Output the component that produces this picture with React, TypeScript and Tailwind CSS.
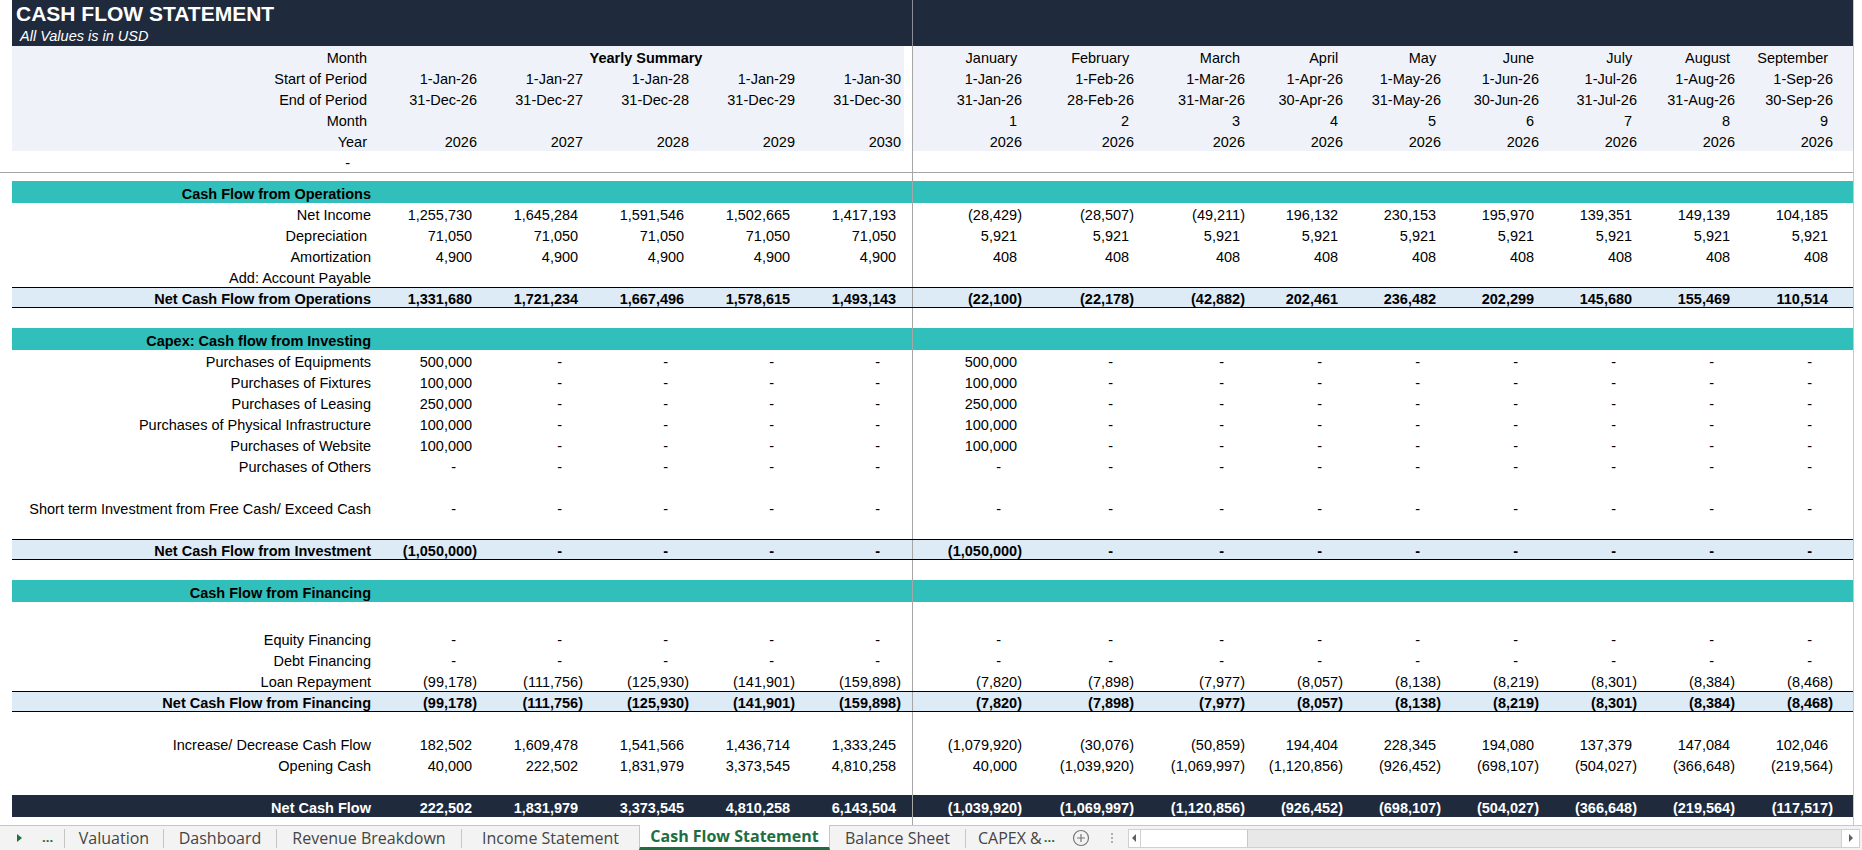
import React from 'react';

const MW = ['w-[112px]', 'w-[112px]', 'w-[111px]', 'w-[98px]', 'w-[98px]', 'w-[98px]', 'w-[98px]', 'w-[98px]', 'w-[98px]'];
const DIV = 'bg-[#a6a6a6]';

function Num({ v }: { v: string }) {
  if (v === '') return null;
  if (v === '-')
    return (
      <>
        -<span className="invisible">00)</span>
      </>
    );
  if (v.startsWith('(')) return <>{v}</>;
  return (
    <>
      {v}
      <span className="invisible">)</span>
    </>
  );
}

type RowProps = {
  h?: string;
  bg?: string;
  gapBg?: string;
  border?: boolean;
  label?: React.ReactNode;
  labelCls?: string;
  yearly?: React.ReactNode;
  y?: string[];
  m?: string[];
  kind?: 'num' | 'text' | 'trail';
  cellCls?: string;
};

function Val({ v, kind }: { v: string; kind: 'num' | 'text' | 'trail' }) {
  if (kind === 'num') return <Num v={v} />;
  if (kind === 'trail')
    return (
      <>
        {v}
        <span className="invisible">)</span>
      </>
    );
  return <>{v}</>;
}

function Row({
  h = 'h-[21px]',
  bg = '',
  gapBg = '',
  border = false,
  label,
  labelCls = 'pr-[3px]',
  yearly,
  y = [],
  m = [],
  kind = 'num',
  cellCls = '',
}: RowProps) {
  return (
    <div className={`flex ${h}`}>
      <div className="w-[12px] shrink-0 bg-white" />
      <div className={`flex flex-1 ${bg} ${border ? 'border-y border-black' : ''}`}>
        <div className={`w-[362px] shrink-0 flex items-center justify-end pt-[4px] whitespace-nowrap ${labelCls}`}>{label}</div>
        {yearly !== undefined ? (
          <div className="w-[530px] shrink-0 flex items-center pt-[4px]">{yearly}</div>
        ) : (
          [0, 1, 2, 3, 4].map((i) => (
            <div key={i} className={`w-[106px] shrink-0 flex items-center justify-end pr-[3px] pt-[4px] whitespace-nowrap ${cellCls}`}>
              {y[i] !== undefined && <Val v={y[i]} kind={kind} />}
            </div>
          ))
        )}
        <div className={`w-[8px] shrink-0 ${gapBg}`} />
        <div className={`w-[1px] shrink-0 ${DIV}`} />
        {MW.map((w, i) => (
          <div key={i} className={`${w} shrink-0 flex items-center justify-end pr-[3px] pt-[4px] whitespace-nowrap ${cellCls}`}>
            {m[i] !== undefined && <Val v={m[i]} kind={kind} />}
          </div>
        ))}
        <div className="flex-1" />
      </div>
    </div>
  );
}

const dash9 = Array(9).fill('-');
const dash8 = Array(8).fill('-');
const dash4 = Array(4).fill('-');
const dash5 = Array(5).fill('-');

export default function App() {
  const hb = 'bg-[#eff3f9]';
  const teal = 'bg-[#30bfbb] font-bold';
  const net = 'bg-[#ddebf7] font-bold';
  return (
    <div className="w-[1862px] h-[850px] overflow-hidden bg-white text-[14.5px] text-black font-['Liberation_Sans',Arial,sans-serif] leading-none">
      <div className="flex h-[825px]">
        <div className="flex-1 flex flex-col">
          {/* Title */}
          <div className="flex h-[25px]">
            <div className="w-[12px] shrink-0" />
            <div className="flex flex-1 bg-[#1f2a3c]">
              <div className="w-[892px] shrink-0 flex items-center pl-[4px] pt-[2px] text-white font-bold text-[21px] whitespace-nowrap">
                CASH FLOW STATEMENT
              </div>
              <div className="w-[8px] shrink-0" />
              <div className="w-[1px] shrink-0 bg-[#8a8f98]" />
              <div className="flex-1" />
            </div>
          </div>
          <div className="flex h-[21px]">
            <div className="w-[12px] shrink-0" />
            <div className="flex flex-1 bg-[#1f2a3c]">
              <div className="w-[892px] shrink-0 flex items-center pl-[8px] pt-[2px] text-white italic text-[14.5px] whitespace-nowrap">
                All Values is in USD
              </div>
              <div className="w-[8px] shrink-0" />
              <div className="w-[1px] shrink-0 bg-[#8a8f98]" />
              <div className="flex-1" />
            </div>
          </div>
          {/* Header rows */}
          <Row
            bg={hb}
            gapBg="bg-white"
            label="Month"
            labelCls="pr-[7px]"
            yearly={<div className="w-full text-center pl-[14px] font-bold">Yearly Summary</div>}
            m={['January', 'February', 'March', 'April', 'May', 'June', 'July', 'August', 'September']}
            kind="trail"
          />
          <Row
            bg={hb}
            gapBg="bg-white"
            label="Start of Period"
            labelCls="pr-[7px]"
            y={['1-Jan-26', '1-Jan-27', '1-Jan-28', '1-Jan-29', '1-Jan-30']}
            m={['1-Jan-26', '1-Feb-26', '1-Mar-26', '1-Apr-26', '1-May-26', '1-Jun-26', '1-Jul-26', '1-Aug-26', '1-Sep-26']}
            kind="text"
          />
          <Row
            bg={hb}
            gapBg="bg-white"
            label="End of Period"
            labelCls="pr-[7px]"
            y={['31-Dec-26', '31-Dec-27', '31-Dec-28', '31-Dec-29', '31-Dec-30']}
            m={['31-Jan-26', '28-Feb-26', '31-Mar-26', '30-Apr-26', '31-May-26', '30-Jun-26', '31-Jul-26', '31-Aug-26', '30-Sep-26']}
            kind="text"
          />
          <Row
            bg={hb}
            gapBg="bg-white"
            label="Month"
            labelCls="pr-[7px]"
            m={['1', '2', '3', '4', '5', '6', '7', '8', '9']}
            kind="trail"
          />
          <Row
            bg={hb}
            gapBg="bg-white"
            label="Year"
            labelCls="pr-[7px]"
            y={['2026', '2027', '2028', '2029', '2030']}
            m={Array(9).fill('2026')}
            kind="text"
          />
          <Row label={<Num v="-" />} />
          <div className="h-[1px] w-full bg-[#a6a6a6]" />
          <Row h="h-[8px]" />

          {/* Operations */}
          <Row h="h-[22px]" bg={teal} label="Cash Flow from Operations" />
          <Row
            label="Net Income"
            y={['1,255,730', '1,645,284', '1,591,546', '1,502,665', '1,417,193']}
            m={['(28,429)', '(28,507)', '(49,211)', '196,132', '230,153', '195,970', '139,351', '149,139', '104,185']}
          />
          <Row label="Depreciation " labelCls="pr-[3px] whitespace-pre" y={Array(5).fill('71,050')} m={Array(9).fill('5,921')} />
          <Row label="Amortization" y={Array(5).fill('4,900')} m={Array(9).fill('408')} />
          <Row label="Add: Account Payable" />
          <Row
            bg={net}
            border
            label="Net Cash Flow from Operations"
            y={['1,331,680', '1,721,234', '1,667,496', '1,578,615', '1,493,143']}
            m={['(22,100)', '(22,178)', '(42,882)', '202,461', '236,482', '202,299', '145,680', '155,469', '110,514']}
          />
          <Row h="h-[20px]" />

          {/* Investing */}
          <Row h="h-[22px]" bg={teal} label="Capex: Cash flow from Investing" />
          <Row label="Purchases of Equipments" y={['500,000', ...dash4]} m={['500,000', ...dash8]} />
          <Row label="Purchases of Fixtures" y={['100,000', ...dash4]} m={['100,000', ...dash8]} />
          <Row label="Purchases of Leasing" y={['250,000', ...dash4]} m={['250,000', ...dash8]} />
          <Row label="Purchases of Physical Infrastructure" y={['100,000', ...dash4]} m={['100,000', ...dash8]} />
          <Row label="Purchases of Website" y={['100,000', ...dash4]} m={['100,000', ...dash8]} />
          <Row label="Purchases of Others" y={dash5} m={dash9} />
          <Row />
          <Row label="Short term Investment from Free Cash/ Exceed Cash" y={dash5} m={dash9} />
          <Row />
          <Row
            bg={net}
            border
            label="Net Cash Flow from Investment"
            y={['(1,050,000)', ...dash4]}
            m={['(1,050,000)', ...dash8]}
          />
          <Row h="h-[20px]" />

          {/* Financing */}
          <Row h="h-[22px]" bg={teal} label="Cash Flow from Financing" />
          <Row h="h-[26px]" />
          <Row label="Equity Financing" y={dash5} m={dash9} />
          <Row label="Debt Financing" y={dash5} m={dash9} />
          <Row
            label="Loan Repayment"
            y={['(99,178)', '(111,756)', '(125,930)', '(141,901)', '(159,898)']}
            m={['(7,820)', '(7,898)', '(7,977)', '(8,057)', '(8,138)', '(8,219)', '(8,301)', '(8,384)', '(8,468)']}
          />
          <Row
            bg={net}
            border
            label="Net Cash Flow from Financing"
            y={['(99,178)', '(111,756)', '(125,930)', '(141,901)', '(159,898)']}
            m={['(7,820)', '(7,898)', '(7,977)', '(8,057)', '(8,138)', '(8,219)', '(8,301)', '(8,384)', '(8,468)']}
          />
          <Row />
          <Row
            label="Increase/ Decrease Cash Flow"
            y={['182,502', '1,609,478', '1,541,566', '1,436,714', '1,333,245']}
            m={['(1,079,920)', '(30,076)', '(50,859)', '194,404', '228,345', '194,080', '137,379', '147,084', '102,046']}
          />
          <Row
            label="Opening Cash"
            y={['40,000', '222,502', '1,831,979', '3,373,545', '4,810,258']}
            m={['40,000', '(1,039,920)', '(1,069,997)', '(1,120,856)', '(926,452)', '(698,107)', '(504,027)', '(366,648)', '(219,564)']}
          />
          <Row h="h-[20px]" />
          <Row
            h="h-[22px]"
            bg="bg-[#1f2a3c] text-white font-bold"
            label="Net Cash Flow"
            y={['222,502', '1,831,979', '3,373,545', '4,810,258', '6,143,504']}
            m={['(1,039,920)', '(1,069,997)', '(1,120,856)', '(926,452)', '(698,107)', '(504,027)', '(366,648)', '(219,564)', '(117,517)']}
          />
          <Row h="flex-1" />
        </div>
        {/* vertical scrollbar edge */}
        <div className="w-[9px] shrink-0 border-l border-[#c8c8c8] bg-white" />
      </div>

      {/* Sheet tabs */}
      <div className="flex h-[25px] border-t border-[#c6c6c6] bg-[#f3f3f3] text-[16px] text-[#444444] font-['Open_Sans','Noto_Sans',sans-serif]">
        <div className="w-[64px] shrink-0 flex items-center">
          <svg width="8" height="10" viewBox="0 0 8 10" className="ml-[16px]">
            <path d="M1 1 L6 5 L1 9 Z" fill="#1e6e42" />
          </svg>
          <span className="ml-[18px] text-[#1e6e42] font-bold text-[13px] leading-none pb-[2px]">...</span>
        </div>
        <div className="w-[1px] h-[19px] self-center bg-[#c6c6c6]" />
        <div className="w-[98px] shrink-0 flex items-center justify-center pb-[1px]">Valuation</div>
        <div className="w-[1px] h-[19px] self-center bg-[#c6c6c6]" />
        <div className="w-[112px] shrink-0 flex items-center justify-center pb-[1px]">Dashboard</div>
        <div className="w-[1px] h-[19px] self-center bg-[#c6c6c6]" />
        <div className="w-[184px] shrink-0 flex items-center justify-center pb-[1px]">Revenue Breakdown</div>
        <div className="w-[1px] h-[19px] self-center bg-[#c6c6c6]" />
        <div className="w-[177px] shrink-0 flex items-center justify-center pb-[1px]">Income Statement</div>
        <div className="w-[191px] shrink-0 -mt-[1px] flex items-center justify-center bg-white border-x border-[#c6c6c6] border-b-[3px] border-b-[#1e6e42] text-[#1e6e42] font-bold">
          Cash Flow Statement
        </div>
        <div className="w-[135px] shrink-0 flex items-center justify-center pb-[1px]">Balance Sheet</div>
        <div className="w-[1px] h-[19px] self-center bg-[#c6c6c6]" />
        <div className="w-[100px] shrink-0 flex items-center pl-[12px] pb-[1px] whitespace-nowrap">
          <span>CAPEX &amp;</span>
          <span className="ml-[2px] text-[#1e6e42] font-bold text-[13px]">...</span>
        </div>
        <div className="w-[30px] shrink-0 flex items-center justify-center">
          <svg width="18" height="18" viewBox="0 0 18 18">
            <circle cx="9" cy="9" r="7.5" fill="none" stroke="#777" strokeWidth="1.2" />
            <path d="M9 5 V13 M5 9 H13" stroke="#777" strokeWidth="1.2" />
          </svg>
        </div>
        <div className="w-[32px] shrink-0 flex items-center justify-center">
          <svg width="4" height="14" viewBox="0 0 4 14">
            <circle cx="2" cy="3" r="1" fill="#9a9a9a" />
            <circle cx="2" cy="7" r="1" fill="#9a9a9a" />
            <circle cx="2" cy="11" r="1" fill="#9a9a9a" />
          </svg>
        </div>
        <div className="flex-1 flex items-center pr-[2px]">
          <div className="flex-1 h-[19px] flex bg-[#e8e8e8] border border-[#d0d0d0]">
            <div className="w-[12px] flex items-center justify-center bg-white border-r border-[#d0d0d0]">
              <svg width="5" height="8" viewBox="0 0 5 8">
                <path d="M4 0 L0 4 L4 8 Z" fill="#606060" />
              </svg>
            </div>
            <div className="w-[107px] bg-white border-r border-[#c8c8c8]" />
            <div className="flex-1" />
            <div className="w-[18px] flex items-center justify-center bg-white border-l border-[#d0d0d0]">
              <svg width="5" height="8" viewBox="0 0 5 8">
                <path d="M1 0 L5 4 L1 8 Z" fill="#606060" />
              </svg>
            </div>
          </div>
        </div>
      </div>
    </div>
  );
}
